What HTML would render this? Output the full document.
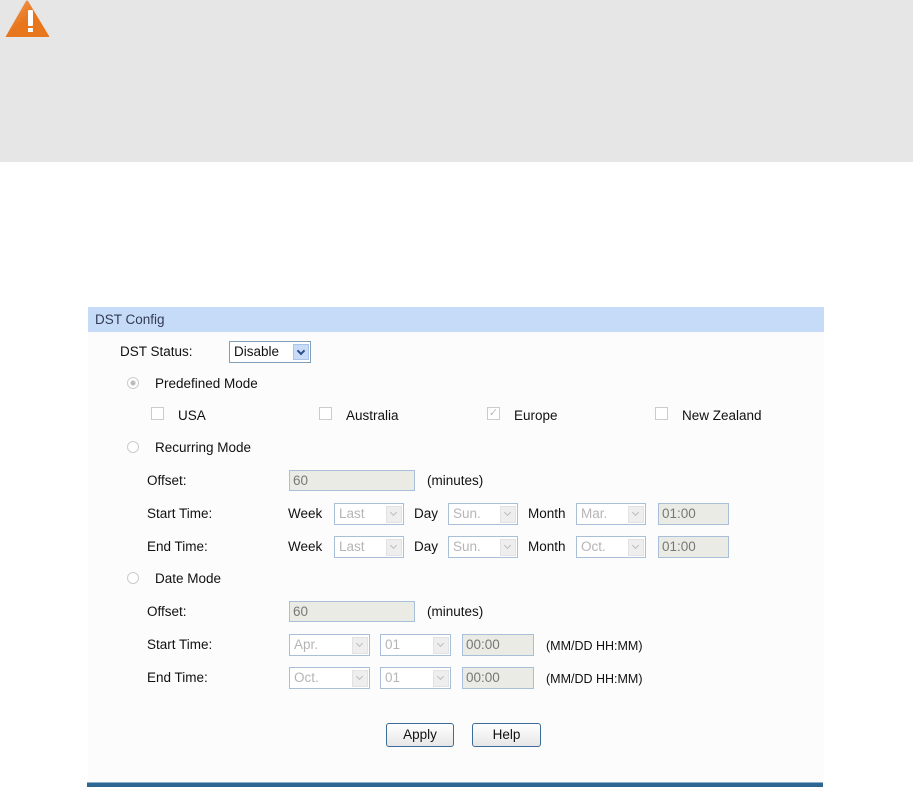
<!DOCTYPE html>
<html><head><meta charset="utf-8"><style>
body{margin:0;width:913px;height:786px;background:#fff;position:relative;overflow:hidden;font-family:"Liberation Sans",Arial,sans-serif;font-size:13.5px;color:#111}
.a{position:absolute}
.t{position:absolute;line-height:16px;white-space:nowrap}
.sel{position:absolute;height:19px;border:1px solid #a9bfd9;background:#fff;box-sizing:border-box;color:#b5b5b5;font-size:13.5px;line-height:17px;padding-left:4px}
.sel i{position:absolute;right:1px;top:1px;width:16px;height:15px;background:#eeeeee;border:1px solid #e2e2e2;box-sizing:border-box}
.sel i:after{content:"";position:absolute;left:4px;top:3px;width:4px;height:4px;border-right:1.5px solid #bbb;border-bottom:1.5px solid #bbb;transform:rotate(45deg)}
.sel i.b:after{border-color:#2a4f8a;border-width:2px}
.inp{position:absolute;height:21px;border:1px solid #a9bfd9;background:#ebebe6;box-sizing:border-box;color:#777;line-height:19px;padding-left:3px}
.rad{position:absolute;width:12px;height:12px;border-radius:50%;border:1px solid #ccc;box-sizing:border-box;background:#fff}
.cb{position:absolute;width:13px;height:13px;border:1px solid #ccc;box-sizing:border-box;background:#fff}
.btn{position:absolute;height:24px;border:1px solid #3c6a9a;border-radius:3px;background:linear-gradient(#fff,#e6e6e6);box-sizing:border-box;text-align:center;line-height:22px;font-size:13.5px}
</style></head><body>
<div class="a" style="left:0;top:0;width:913px;height:162px;background:#e6e6e6"></div>
<svg class="a" style="left:4px;top:0" width="46" height="38" viewBox="0 0 46 38"><defs><linearGradient id="g" x1="0" y1="0" x2="1" y2="1"><stop offset="0" stop-color="#f5a060"/><stop offset=".5" stop-color="#e8761c"/></linearGradient></defs><path d="M24 1 L45 36 Q46 37 44 37 L3 37 Q1 37 2 36 L22 1 Q23 0 24 1Z" fill="url(#g)"/><rect x="24" y="10" width="5" height="16" fill="#fff" rx="1"/><rect x="24" y="28" width="5" height="4" fill="#fff"/></svg>
<div class="a" style="left:88px;top:307px;width:736px;height:479px;background:#fcfcfc"></div>
<div class="a" style="left:88px;top:307px;width:736px;height:25px;background:#c6dbf7"></div>
<div class="t" style="left:95px;top:312px;color:#333a55">DST Config</div>
<div class="t" style="left:120px;top:344px">DST Status:</div>
<div class="sel" style="left:229px;top:341px;width:82px;height:22px;color:#111;border-color:#7f9db9;line-height:20px">Disable<i class="b" style="background:#c9dbf6;border-color:#aac3e8;top:2px;height:16px"></i></div>
<div class="rad" style="left:127px;top:377px;background:radial-gradient(circle,#bbb 0 2px,#fff 3px)"></div>
<div class="t" style="left:155px;top:376px">Predefined Mode</div>
<div class="cb" style="left:151px;top:407px"></div><div class="t" style="left:178px;top:408px">USA</div>
<div class="cb" style="left:319px;top:407px"></div><div class="t" style="left:346px;top:408px">Australia</div>
<div class="cb" style="left:487px;top:407px;color:#bbb;font-size:11px;line-height:11px;text-align:center">✓</div><div class="t" style="left:514px;top:408px">Europe</div>
<div class="cb" style="left:655px;top:407px"></div><div class="t" style="left:682px;top:408px">New Zealand</div>
<div class="rad" style="left:127px;top:441px"></div>
<div class="t" style="left:155px;top:440px">Recurring Mode</div>
<div class="t" style="left:147px;top:473px">Offset:</div>
<div class="inp" style="left:289px;top:470px;width:126px">60</div>
<div class="t" style="left:427px;top:473px">(minutes)</div>
<div class="t" style="left:147px;top:506px">Start Time:</div>
<div class="t" style="left:288px;top:506px">Week</div>
<div class="sel" style="left:334px;top:503px;width:70px;height:22px;line-height:20px">Last<i style="top:2px;height:17px"></i></div>
<div class="t" style="left:414px;top:506px">Day</div>
<div class="sel" style="left:448px;top:503px;width:70px;height:22px;line-height:20px">Sun.<i style="top:2px;height:17px"></i></div>
<div class="t" style="left:528px;top:506px">Month</div>
<div class="sel" style="left:576px;top:503px;width:70px;height:22px;line-height:20px">Mar.<i style="top:2px;height:17px"></i></div>
<div class="inp" style="left:658px;top:503px;width:71px;height:22px">01:00</div>
<div class="t" style="left:147px;top:539px">End Time:</div>
<div class="t" style="left:288px;top:539px">Week</div>
<div class="sel" style="left:334px;top:536px;width:70px;height:22px;line-height:20px">Last<i style="top:2px;height:17px"></i></div>
<div class="t" style="left:414px;top:539px">Day</div>
<div class="sel" style="left:448px;top:536px;width:70px;height:22px;line-height:20px">Sun.<i style="top:2px;height:17px"></i></div>
<div class="t" style="left:528px;top:539px">Month</div>
<div class="sel" style="left:576px;top:536px;width:70px;height:22px;line-height:20px">Oct.<i style="top:2px;height:17px"></i></div>
<div class="inp" style="left:658px;top:536px;width:71px;height:22px">01:00</div>
<div class="rad" style="left:127px;top:572px"></div>
<div class="t" style="left:155px;top:571px">Date Mode</div>
<div class="t" style="left:147px;top:604px">Offset:</div>
<div class="inp" style="left:289px;top:601px;width:126px">60</div>
<div class="t" style="left:427px;top:604px">(minutes)</div>
<div class="t" style="left:147px;top:637px">Start Time:</div>
<div class="sel" style="left:289px;top:634px;width:81px;height:22px;line-height:20px">Apr.<i style="top:2px;height:17px"></i></div>
<div class="sel" style="left:380px;top:634px;width:71px;height:22px;line-height:20px">01<i style="top:2px;height:17px"></i></div>
<div class="inp" style="left:462px;top:634px;width:72px;height:22px">00:00</div>
<div class="t" style="left:546px;top:638px;font-size:12.5px">(MM/DD HH:MM)</div>
<div class="t" style="left:147px;top:670px">End Time:</div>
<div class="sel" style="left:289px;top:667px;width:81px;height:22px;line-height:20px">Oct.<i style="top:2px;height:17px"></i></div>
<div class="sel" style="left:380px;top:667px;width:71px;height:22px;line-height:20px">01<i style="top:2px;height:17px"></i></div>
<div class="inp" style="left:462px;top:667px;width:72px;height:22px">00:00</div>
<div class="t" style="left:546px;top:671px;font-size:12.5px">(MM/DD HH:MM)</div>
<div class="btn" style="left:386px;top:723px;width:68px">Apply</div>
<div class="btn" style="left:472px;top:723px;width:69px">Help</div>
<div class="a" style="left:87px;top:782px;width:736px;height:4px;background:#2d6690;border-top:1px solid #8fb0cc"></div>
</body></html>
